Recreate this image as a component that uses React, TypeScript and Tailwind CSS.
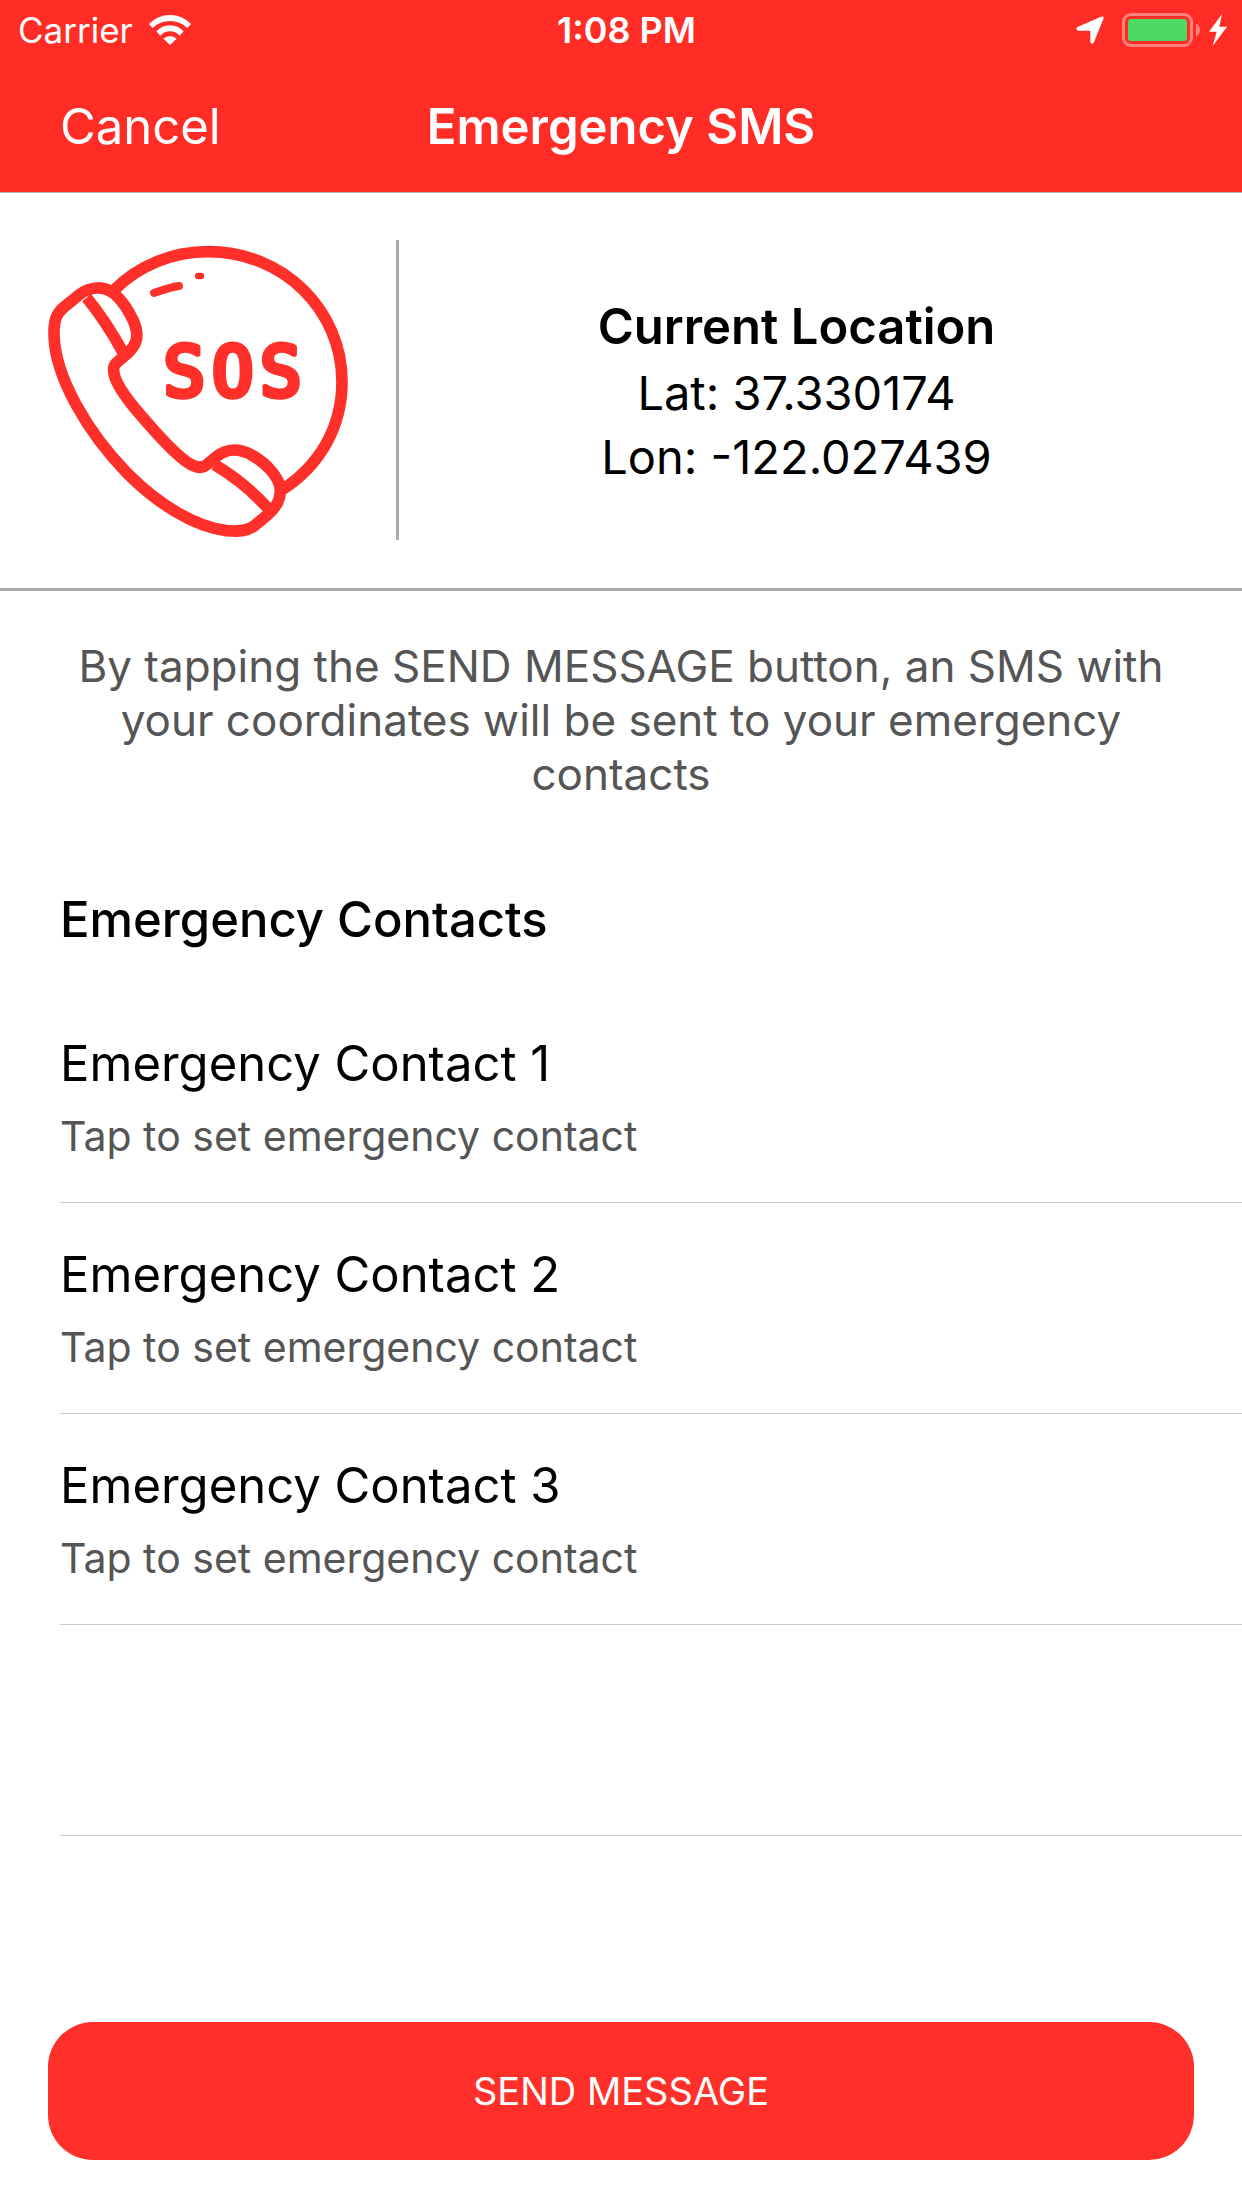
import React from 'react';

interface Contact {
    id: number;
    name: string;
    detail: string;
}

const contacts: Contact[] = [
    { id: 1, name: 'Emergency Contact 1', detail: 'Tap to set emergency contact' },
    { id: 2, name: 'Emergency Contact 2', detail: 'Tap to set emergency contact' },
    { id: 3, name: 'Emergency Contact 3', detail: 'Tap to set emergency contact' }
];

const WifiIcon: React.FC = () => (
    <svg className="w-[42px] h-[30px]" viewBox="0 0 126 90" fill="#fff" aria-hidden="true">
        <path d="M0 27Q26 0 63 0T126 27L115 39Q93 18 63 18T11 39Z" />
        <path d="M22 49Q39 31 63 31T104 49L92 62Q80 49 63 49T34 62Z" />
        <path d="M43 71Q63 55 83 71L63 90Z" />
    </svg>
);

const LocationIcon: React.FC = () => (
    <svg className="w-[28px] h-[28px]" viewBox="0 0 84 84" fill="#fff" aria-hidden="true">
        <path d="M75 2Q86-1 82 9L54 79Q51 85 46 82Q43 81 43 77V48Q43 44 39 44H8Q1 44 1 39Q1 34 6 32Z" />
    </svg>
);

const BatteryIcon: React.FC = () => (
    <svg className="w-[78px] h-[34px]" viewBox="0 0 78 34" aria-hidden="true">
        <rect x="1.5" y="1.5" width="68" height="31" rx="7.5" fill="none" stroke="#fff" strokeOpacity="0.4" strokeWidth="3" />
        <rect x="6" y="6" width="59" height="22" rx="3" fill="#4cd964" />
        <path d="M74 10.500Q78 13 78 17T74 23.500Z" fill="#fff" fillOpacity="0.4" />
    </svg>
);

const BoltIcon: React.FC = () => (
    <svg className="w-[18px] h-[32px]" viewBox="0 0 54 96" fill="#fff" aria-hidden="true">
        <path d="M39 0L0 53H23L11 96L54 38H31Z" />
    </svg>
);

const SosIcon: React.FC = () => (
    <svg className="w-[300px] h-[300px] shrink-0" viewBox="54 30 900 900" role="img" aria-label="SOS call">
        <g fill="none" stroke="#ff2f29" strokeWidth="35">
            {/* Globe */}
            <path d="M254 179C325 106 428 65 535 65C760 65 936 240 936 456C936 590 870 705 758 778" />
            {/* Handset */}
            <path d="M144 197C180 166 224 168 254 192C274 210 297 244 309 270C330 316 322 346 288 374L264 395C248 405 249 420 254 440C270 487 322 545 372 601C428 663 462 693 484 704C504 715 520 714 533 702L552 686C590 652 627 654 667 676C710 701 742 737 750 770C755 806 740 830 712 855L671 889C650 904 626 905 590 902C500 892 390 828 292 730C175 610 72 440 72 309C72 270 79 252 100 233Z" />
            <path d="M170 203C206 247 247 309 279 367" />
            <path d="M554 704C610 737 667 783 712 833" />
        </g>
        <g fill="none" stroke="#ff2f29" strokeLinecap="round">
            <path d="M372 189C395 181 418 172 447 168" strokeWidth="24" />
            <path d="M504 138H513" strokeWidth="19" />
        </g>
        <text
            x="463 608 752"
            y="497"
            textAnchor="middle"
            className="font-['DejaVu_Sans_Mono',monospace]"
            fontSize="207"
            fill="#ff2f29"
            stroke="#ff2f29"
            strokeWidth="17"
            strokeLinejoin="round"
        >
            SOS
        </text>
    </svg>
);

const StatusBar: React.FC = () => (
    <div className="h-[60px] grid grid-cols-3 items-center pl-[18px] pr-[15px]">
        <div className="flex items-center gap-4 text-[35px]">
            <span>Carrier</span>
            <WifiIcon />
        </div>
        <span className="pl-2 text-center text-[36px] font-semibold">1:08 PM</span>
        <div className="flex items-center justify-end">
            <LocationIcon />
            <span className="w-[18px]"></span>
            <BatteryIcon />
            <span className="w-[9px]"></span>
            <BoltIcon />
        </div>
    </div>
);

const NavBar: React.FC = () => (
    <div className="h-[132px] grid grid-cols-[1fr_auto_1fr] items-center px-[60px] pt-[2px]">
        <button className="justify-self-start text-[49px]">Cancel</button>
        <h1 className="text-center text-[49px] font-semibold whitespace-nowrap">Emergency SMS</h1>
    </div>
);

const ContactRow: React.FC<{ contact: Contact }> = ({ contact }) => (
    <li className="border-b border-[#c8c7cc]">
        <button className="w-full h-[210px] flex flex-col justify-center gap-2 pt-[5px] text-left">
            <span className="text-[49px] leading-[64px]">{contact.name}</span>
            <span className="text-[41px] leading-[64px] text-[#555]">{contact.detail}</span>
        </button>
    </li>
);

const App: React.FC = () => {
    return (
        <div className="min-h-screen flex flex-col bg-white text-black font-['Inter',sans-serif]">
            <header className="bg-[#ff2d26] text-white border-b border-[#b2b2b2]">
                <StatusBar />
                <NavBar />
            </header>

            {/* Location */}
            <section className="flex items-center px-[48px] pt-[47px] pb-[48px] border-b-3 border-[#aaa]">
                <SosIcon />
                <div className="w-[3px] h-[300px] ml-[48px] bg-[#aaa]"></div>
                <div className="flex-1 pt-[3px] text-center text-[47px] leading-[64px]">
                    <h2 className="mb-[2px] text-[49px] font-semibold">Current Location</h2>
                    <p>Lat: 37.330174</p>
                    <p>Lon: -122.027439</p>
                </div>
            </section>

            <main className="flex-1 flex flex-col">
                <p className="px-[60px] pt-[48px] text-center text-[44px] leading-[54px] text-[#555]">
                    By tapping the SEND MESSAGE button, an SMS with your coordinates will be sent to your emergency contacts
                </p>

                <h2 className="pl-[60px] mt-[87px] mb-[40px] text-[49px] leading-[64px] font-medium">Emergency Contacts</h2>

                <ul className="pl-[60px]">
                    {contacts.map(contact => (
                        <ContactRow key={contact.id} contact={contact} />
                    ))}
                    <li className="h-[211px] border-b border-[#c8c7cc]"></li>
                </ul>
            </main>

            <footer className="p-[48px]">
                <button className="w-full h-[138px] rounded-[45px] bg-[#ff2f29] text-white text-[38px]">SEND MESSAGE</button>
            </footer>
        </div>
    );
};

export default App;
